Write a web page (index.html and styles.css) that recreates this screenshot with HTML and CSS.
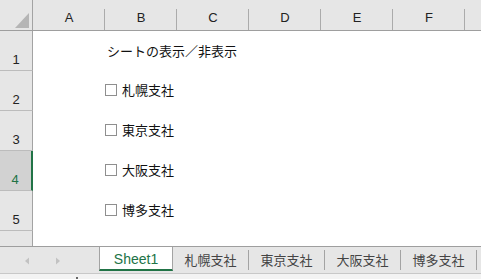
FILE: index.html
```html
<!DOCTYPE html>
<html lang="ja">
<head>
    <meta charset="utf-8">
    <link rel="stylesheet" href="styles.css">
</head>
<body>
<div class="book">
    <!-- column headers -->
    <div class="colhead">
        <div class="corner">
            <svg width="32" height="30" viewBox="0 0 32 30"><polygon points="15,28 29,28 29,13" fill="#b5b5b5"/></svg>
        </div>
        <div class="col">A</div>
        <div class="col">B</div>
        <div class="col">C</div>
        <div class="col">D</div>
        <div class="col">E</div>
        <div class="col">F</div>
        <div class="col last"></div>
    </div>

    <!-- rows -->
    <div class="row">
        <div class="rh">1</div>
        <div class="cells"><span class="title">シートの表示／非表示</span></div>
    </div>
    <div class="row">
        <div class="rh">2</div>
        <div class="cells"><label class="chk"><span class="box"></span>札幌支社</label></div>
    </div>
    <div class="row">
        <div class="rh">3</div>
        <div class="cells"><label class="chk"><span class="box"></span>東京支社</label></div>
    </div>
    <div class="row">
        <div class="rh sel">4</div>
        <div class="cells"><label class="chk"><span class="box"></span>大阪支社</label></div>
    </div>
    <div class="row">
        <div class="rh">5</div>
        <div class="cells"><label class="chk"><span class="box"></span>博多支社</label></div>
    </div>
    <div class="row part">
        <div class="rh"></div>
        <div class="cells"></div>
    </div>

    <!-- sheet tabs -->
    <div class="tabbar">
        <div class="nav">
            <svg width="8" height="8" viewBox="0 0 8 8"><polygon points="1,4 5,0.5 5,7.5" fill="#c2c2c2"/></svg>
            <svg width="8" height="8" viewBox="0 0 8 8"><polygon points="7,4 3,0.5 3,7.5" fill="#c2c2c2"/></svg>
        </div>
        <div class="tab active">Sheet1</div>
        <div class="tab">札幌支社</div>
        <div class="tab">東京支社</div>
        <div class="tab">大阪支社</div>
        <div class="tab">博多支社</div>
    </div>
    <div class="status"><span class="grip"></span></div>
</div>
</body>
</html>
```

FILE: styles.css
```css
html,body{margin:0;padding:0;}
body{width:481px;height:279px;overflow:hidden;background:#fff;font-family:"Liberation Sans","Noto Sans CJK JP",sans-serif;}

.book{display:flex;flex-direction:column;height:279px;}

/* column header */
.colhead{display:flex;height:31px;flex:none;background:#e6e6e6;border-bottom:1px solid #9e9e9e;box-sizing:border-box;}
.corner{width:33px;flex:none;border-right:1px solid #a3a3a3;box-sizing:border-box;}
.corner svg{display:block;}
.col{width:72px;flex:none;position:relative;box-sizing:border-box;text-align:center;padding-top:6px;line-height:24px;font-size:13px;color:#222;}
.col:after{content:"";position:absolute;right:0;top:9px;bottom:0;width:1px;background:#ababab;}
.col.last{flex:1;}
.col.last:after{display:none;}

/* rows */
.row{display:flex;height:40px;flex:none;}
.row.part{height:15px;}
.rh{width:33px;flex:none;box-sizing:border-box;background:#e6e6e6;border-right:1px solid #a3a3a3;border-bottom:1px solid #bcbcbc;display:flex;align-items:flex-end;justify-content:center;padding-bottom:2px;font-size:13px;line-height:16px;color:#222;}
.row.part .rh{border-bottom:none;}
.rh.sel{background:#d2d2d2;border-right:2px solid #217346;color:#217346;padding-right:1px;}
.cells{flex:1;display:flex;align-items:center;font-family:"Noto Sans CJK JP",sans-serif;font-size:13px;color:#111;}
.title{margin-left:74px;line-height:18px;}
.chk{display:flex;align-items:center;margin-left:72px;margin-bottom:3px;line-height:18px;}
.box{width:12px;height:12px;box-sizing:border-box;border:1px solid #8f8f8f;background:#fff;margin-right:5px;}

/* tabs */
.tabbar{display:flex;height:27px;flex:none;background:#e6e6e6;border-top:1px solid #9e9e9e;box-sizing:border-box;}
.nav{width:99px;flex:none;display:flex;align-items:center;padding-left:24px;gap:21px;box-sizing:border-box;padding-top:1px;}
.nav svg{display:block;}
.tab{width:76px;flex:none;height:20px;margin-top:3px;border-right:1px solid #a3a3a3;box-sizing:border-box;text-align:center;line-height:20px;font-family:"Noto Sans CJK JP",sans-serif;font-size:13px;color:#444;}
.tab.active{width:74px;height:24px;margin-top:0;background:#fff;border-left:1px solid #a3a3a3;border-right:1px solid #a3a3a3;border-bottom:2px solid #217346;font-family:"Liberation Sans",sans-serif;font-size:14px;line-height:22px;padding-top:1px;color:#217346;}

.status{flex:1;background:#f3f3f3;border-top:1px solid #c8c8c8;position:relative;}
.grip{position:absolute;left:76px;top:3px;width:2px;height:3px;background:#666;}
```
